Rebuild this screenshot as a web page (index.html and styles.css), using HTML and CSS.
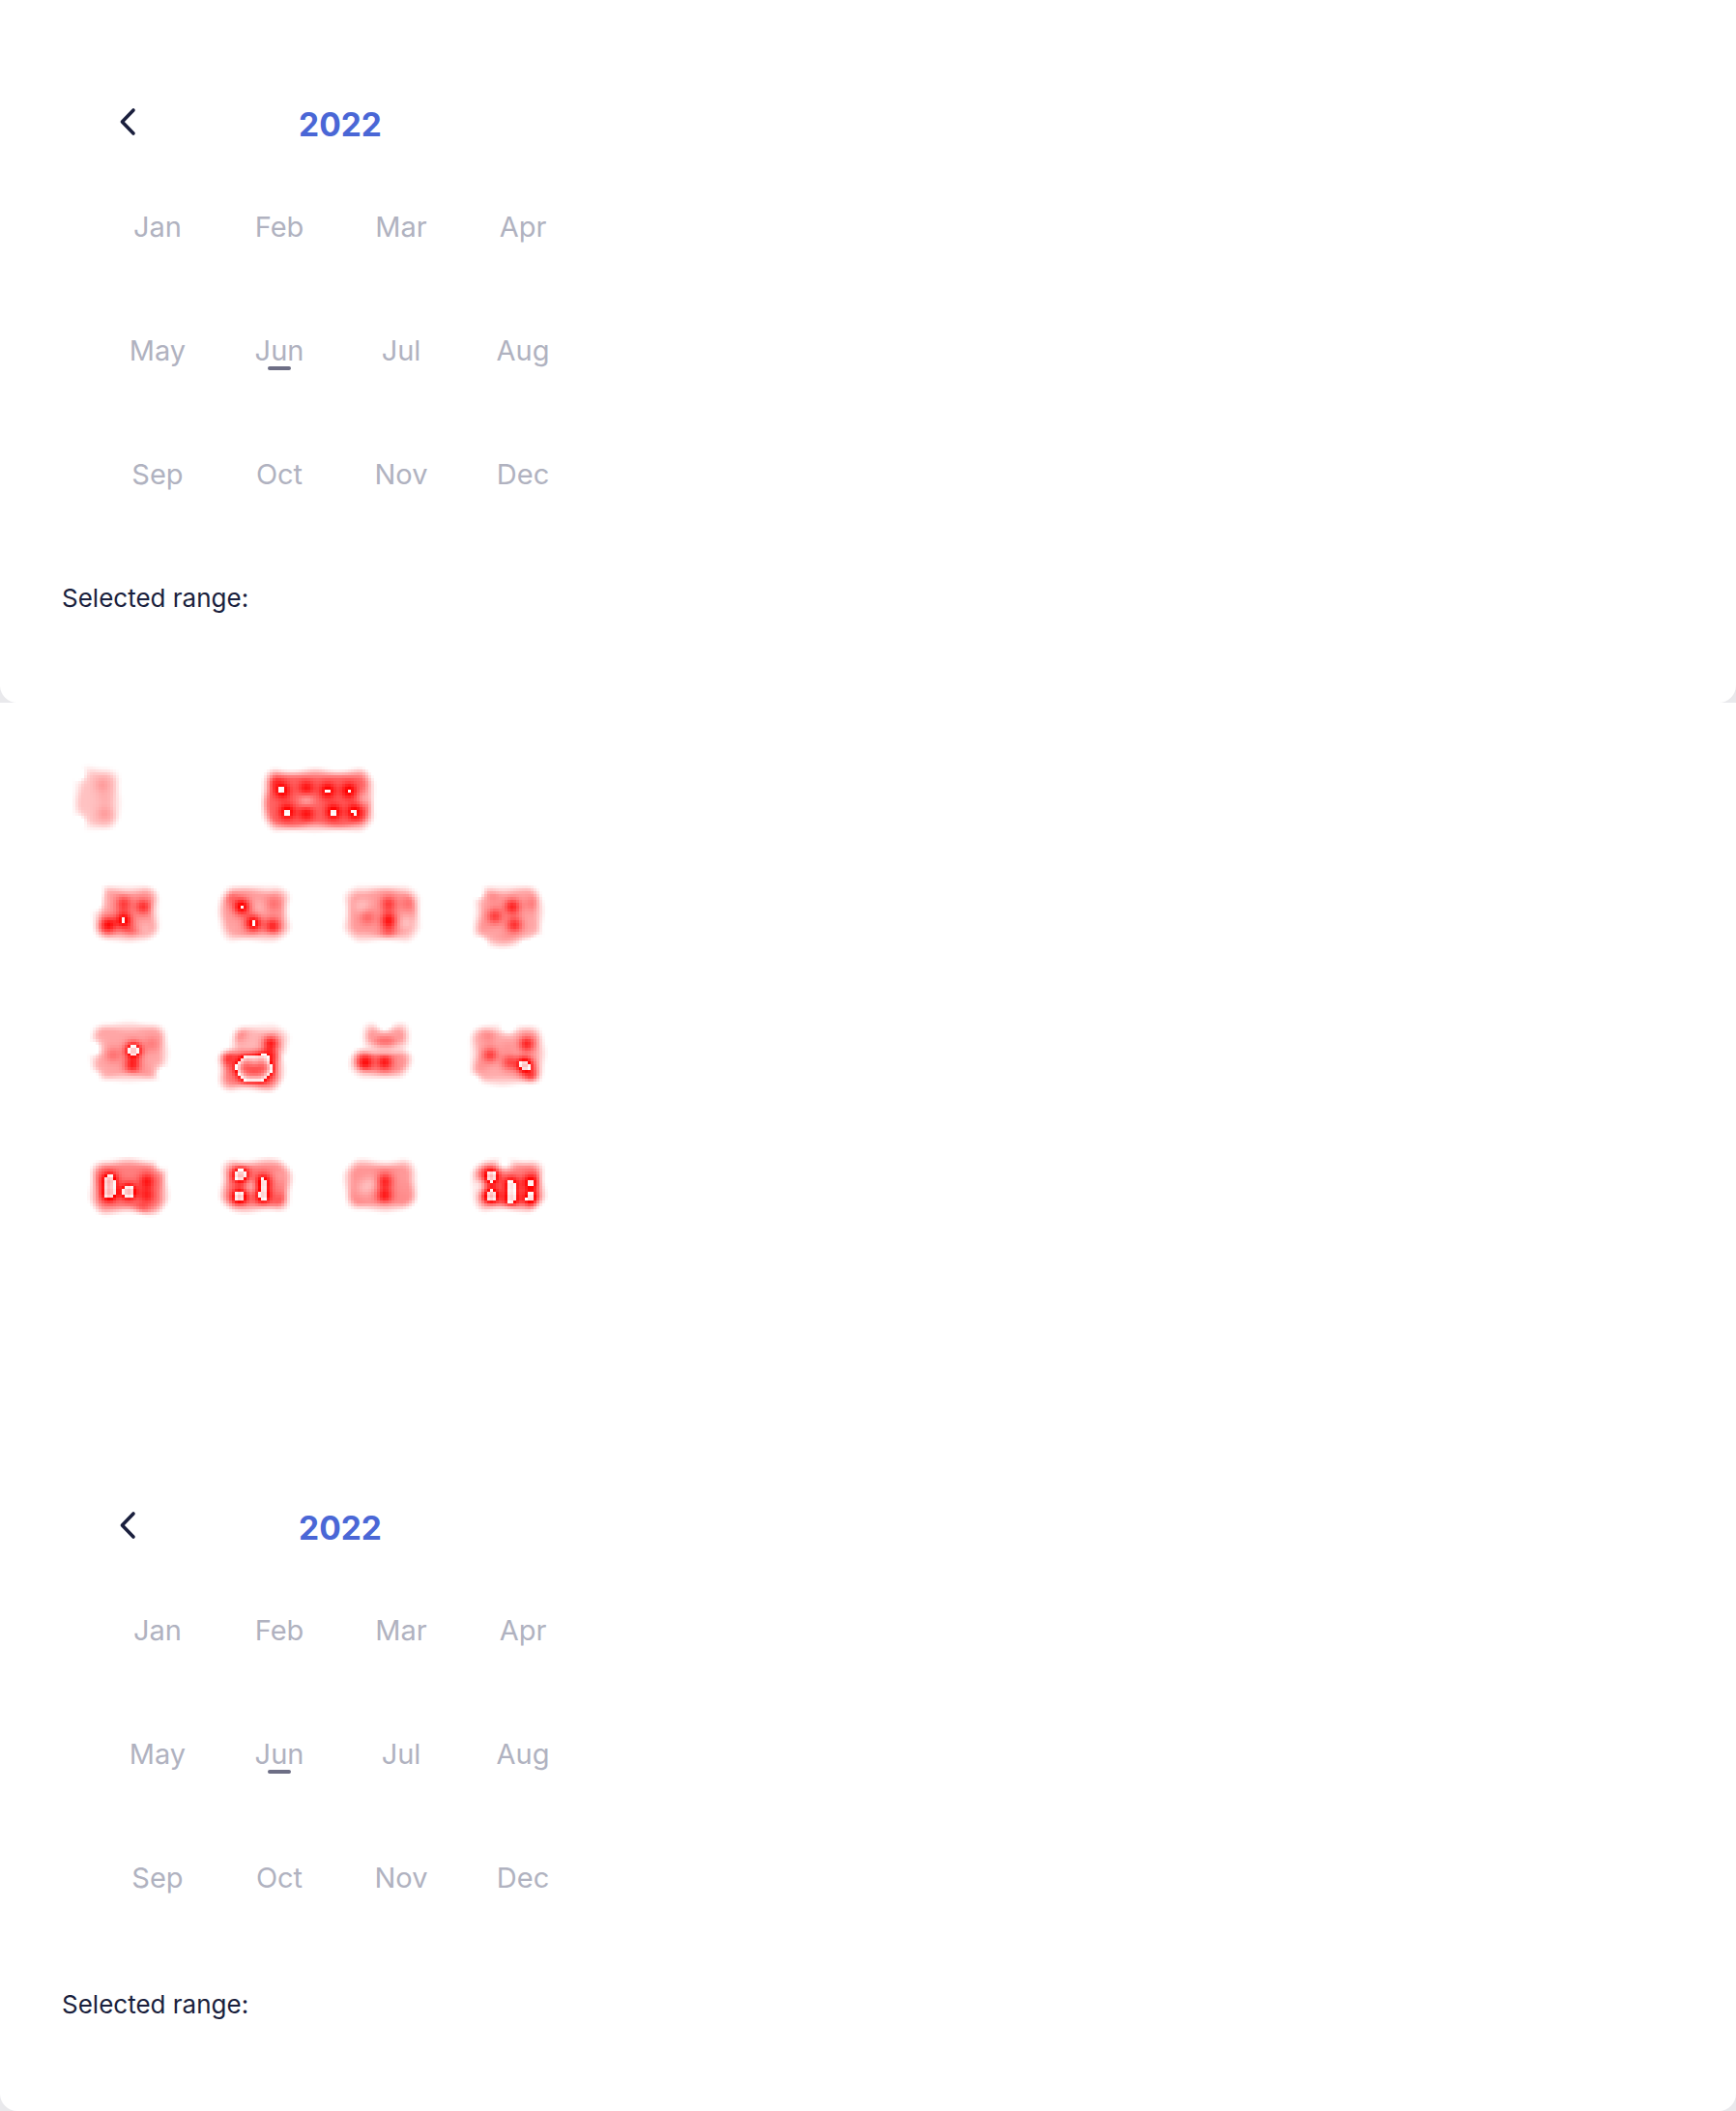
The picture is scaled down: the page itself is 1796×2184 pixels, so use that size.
FILE: index.html
```html
<!DOCTYPE html>
<html lang="en">

<head>
    <meta charset="UTF-8">
    <meta name="viewport" content="width=device-width, initial-scale=1.0">
    <title>month range picker</title>
    <link rel="stylesheet" href="styles.css">
</head>

<body>
    <section class="panel">
        <div class="calendar">
            <div class="cal-head">
                <button class="back-btn" aria-label="Previous year">
                    <svg width="20" height="32" viewBox="0 0 20 32" fill="none">
                        <path d="M16 4 L4.4 16 L16 28" stroke="#1a1f3d" stroke-width="3.6" stroke-linecap="round" stroke-linejoin="round" />
                    </svg>
                </button>
                <div class="year">2022</div>
            </div>
            <div class="months">
                <div class="month">Jan</div>
                <div class="month">Feb</div>
                <div class="month">Mar</div>
                <div class="month">Apr</div>
                <div class="month">May</div>
                <div class="month current">Jun</div>
                <div class="month">Jul</div>
                <div class="month">Aug</div>
                <div class="month">Sep</div>
                <div class="month">Oct</div>
                <div class="month">Nov</div>
                <div class="month">Dec</div>
            </div>
            <div class="range">Selected range:</div>
        </div>
    </section>

    <section class="panel panel-map">
        <canvas class="heat" id="heat" width="200" height="242"></canvas>
        <div class="calendar">
            <div class="cal-head">
                <button class="back-btn" aria-label="Previous year">
                    <svg width="20" height="32" viewBox="0 0 20 32" fill="none">
                        <path d="M16 4 L4.4 16 L16 28" stroke="#1a1f3d" stroke-width="3.6" stroke-linecap="round" stroke-linejoin="round" />
                    </svg>
                </button>
                <div class="year">2022</div>
            </div>
            <div class="months">
                <div class="month">Jan</div>
                <div class="month">Feb</div>
                <div class="month">Mar</div>
                <div class="month">Apr</div>
                <div class="month">May</div>
                <div class="month current">Jun</div>
                <div class="month">Jul</div>
                <div class="month">Aug</div>
                <div class="month">Sep</div>
                <div class="month">Oct</div>
                <div class="month">Nov</div>
                <div class="month">Dec</div>
            </div>
            <div class="range">Selected range:</div>
        </div>
    </section>

    <script src="heat.js"></script>
</body>

</html>
```

FILE: styles.css
```css
* {
    box-sizing: border-box;
}

body {
    margin: 0;
    background-color: #e9e9ec;
    font-family: Inter, "Noto Sans", sans-serif;
}

.panel {
    background-color: #fff;
    border-radius: 0 0 18px 18px;
    overflow: hidden;
}

.calendar {
    padding: 96px 0 90px 64px;
}

.panel-map .calendar {
    padding-bottom: 92px;
}

.cal-head {
    display: grid;
    grid-template-columns: 64px 1fr 64px;
    align-items: center;
    width: 504px;
    height: 64px;
    margin-left: 36px;
}

.back-btn {
    display: flex;
    align-items: center;
    justify-content: center;
    padding: 0 0 4px;
    border: none;
    background: none;
    height: 64px;
}

.year {
    padding-top: 1px;
    text-align: center;
    font-size: 33.5px;
    font-weight: 700;
    color: #4a67d6;
}

.months {
    display: grid;
    grid-template-columns: repeat(4, 126px);
    grid-auto-rows: 128px;
    margin: 10px 0 0 36px;
}

.month {
    display: flex;
    align-items: center;
    justify-content: center;
    position: relative;
    font-size: 29px;
    color: #b0b2c0;
}

.month.current::after {
    content: "";
    position: absolute;
    left: 51px;
    top: 81px;
    width: 24px;
    height: 4px;
    border-radius: 2px;
    background-color: #6d6e85;
}

.range {
    margin-top: 47px;
    font-size: 26px;
    line-height: 36px;
    color: #1a1f3d;
}

.panel-map .range {
    margin-top: 50px;
}

.heat {
    display: block;
    width: 600px;
    height: 725px;
    image-rendering: pixelated;
}
```

FILE: heat.js
```js
// click density per element, page coordinates
// box: [x0, y0, x1, y1, base level], pts: [x, y, level at that point]
const areas = [
    // back arrow
    { box: [78, 795, 123, 857, .24], pts: [[106, 812, .38], [108, 842, .38], [108, 826, .3], [80, 800, -.2], [80, 852, -.2]] },
    // 2022
    { box: [273, 798, 385, 858, .6], pts: [[292, 818, 1.03], [317, 816, .95], [339, 818, 1.03], [361, 818, 1.03], [297, 840, 1.05], [317, 841, .95], [345, 840, 1.06], [367, 840, 1.06], [317, 828, .32], [378, 826, .35], [285, 808, .75]] },
    // Jan
    { box: [98, 918, 163, 972, .38], pts: [[112, 957, .95], [128, 952, 1.02], [128, 935, .75], [148, 938, .8], [98, 922, -.4], [98, 935, -.2], [150, 962, .3], [135, 965, .6]] },
    // Feb
    { box: [228, 918, 298, 972, .38], pts: [[250, 938, 1.03], [262, 955, 1.03], [282, 958, .85], [238, 928, .55], [283, 935, .55], [237, 963, .35], [268, 940, .3]] },
    // Mar
    { box: [358, 918, 433, 972, .38], pts: [[402, 952, .9], [402, 935, .75], [380, 949, .6], [422, 935, .55], [402, 965, .6], [375, 938, .25], [420, 955, .25]] },
    // Apr
    { box: [492, 918, 560, 978, .35], pts: [[530, 938, .85], [512, 948, .75], [532, 957, .8], [510, 928, .45], [550, 935, .5], [500, 960, .4], [523, 972, .4], [492, 922, -.3], [558, 976, -.3], [496, 978, -.3], [544, 980, -.2]] },
    // May
    { box: [95, 1060, 172, 1118, .35], pts: [[138, 1087, 1.25], [137, 1103, .85], [117, 1092, .55], [157, 1080, .5], [96, 1085, -.2], [170, 1112, -.2], [153, 1112, .4], [96, 1116, -.1]] },
    // Jun
    { box: [240, 1062, 297, 1098, .28], pts: [[280, 1080, .9], [248, 1070, .45]] },
    { box: [227, 1086, 292, 1128, .5], pts: [[250, 1106, 1.15], [263, 1108, 1.15], [276, 1106, 1.15], [256, 1099, 1], [270, 1099, 1], [256, 1115, 1], [270, 1115, 1], [235, 1095, .8]] },
    // Jul
    { box: [375, 1060, 424, 1084, .4], pts: [[398, 1058, -.3]] },
    { box: [387, 1072, 410, 1092, .2], pts: [] },
    { box: [363, 1086, 425, 1115, .42], pts: [[378, 1100, .95], [398, 1100, .9]] },
    // Aug
    { box: [488, 1062, 562, 1122, .32], pts: [[545, 1080, .85], [543, 1103, 1.25], [507, 1092, .75], [527, 1100, .7], [505, 1072, .45], [525, 1083, .4], [550, 1116, .7], [497, 1105, .4], [526, 1060, -.3], [488, 1122, -.3]] },
    // Sep
    { box: [95, 1202, 172, 1255, .5], pts: [[113, 1222, 1.25], [113, 1236, 1.25], [133, 1234, 1.3], [152, 1223, .9], [152, 1238, .85], [147, 1257, 1], [168, 1204, -.1]] },
    // Oct
    { box: [230, 1202, 300, 1253, .48], pts: [[249, 1217, 1.3], [248, 1239, 1.25], [272, 1224, 1.12], [272, 1238, 1.15], [290, 1217, .4], [290, 1243, .65], [260, 1228, .25]] },
    // Nov
    { box: [358, 1203, 430, 1252, .42], pts: [[398, 1223, .85], [398, 1238, .88], [377, 1230, .3], [386, 1225, .3], [417, 1217, .4], [417, 1240, .45], [370, 1243, .45]] },
    // Dec
    { box: [490, 1202, 562, 1252, .48], pts: [[508, 1218, 1.3], [508, 1238, 1.3], [529, 1226, 1.08], [529, 1240, 1.08], [549, 1224, 1.08], [549, 1240, 1.08], [495, 1228, .1], [530, 1250, .7], [550, 1250, .7], [522, 1203, -.1]] }
]

const CELL = 3
const TOP = 727
const SIGMA = 6
const RADIUS = 20
const FADE = 14
const GROW = 5

function smooth(t) {
    t = Math.min(Math.max(t, 0), 1)
    return t * t * (3 - 2 * t)
}

// 1 inside the box, falling to 0 at a rounded, slightly lumpy outline
function cover([x0, y0, x1, y1], px, py) {
    const r = Math.min(RADIUS, (x1 - x0) / 2 + GROW, (y1 - y0) / 2 + GROW)
    const dx = Math.max(x0 - GROW + r - px, 0, px - x1 - GROW + r)
    const dy = Math.max(y0 - GROW + r - py, 0, py - y1 - GROW + r)
    const lump = 1.5 * Math.sin(px * .13) * Math.cos(py * .17)
    return smooth((r - Math.hypot(dx, dy) + lump) / FADE)
}

const heatEl = document.querySelector('#heat')
const ctx = heatEl.getContext('2d')
const img = ctx.createImageData(heatEl.width, heatEl.height)

for (let row = 0; row < heatEl.height; row++) {
    for (let col = 0; col < heatEl.width; col++) {
        const px = col * CELL + 1.5
        const py = row * CELL + 1.5 + TOP
        let v = 0
        areas.forEach(({ box, pts }) => {
            const inBox = cover(box, px, py)
            if (inBox === 0) return
            const base = box[4]
            let level = base
            pts.forEach(([x, y, target]) => {
                const d2 = (px - x) ** 2 + (py - y) ** 2
                level += (target - base) * Math.exp(-d2 / (2 * SIGMA * SIGMA))
            })
            v += Math.max(level, 0) * inBox
        })
        // counts past the top of the scale wrap round to zero again
        if (v > 1) v -= 1
        const i = (row * heatEl.width + col) * 4
        img.data[i] = 255
        img.data[i + 3] = Math.round(v * 255)
    }
}
ctx.putImageData(img, 0, 0)
```
